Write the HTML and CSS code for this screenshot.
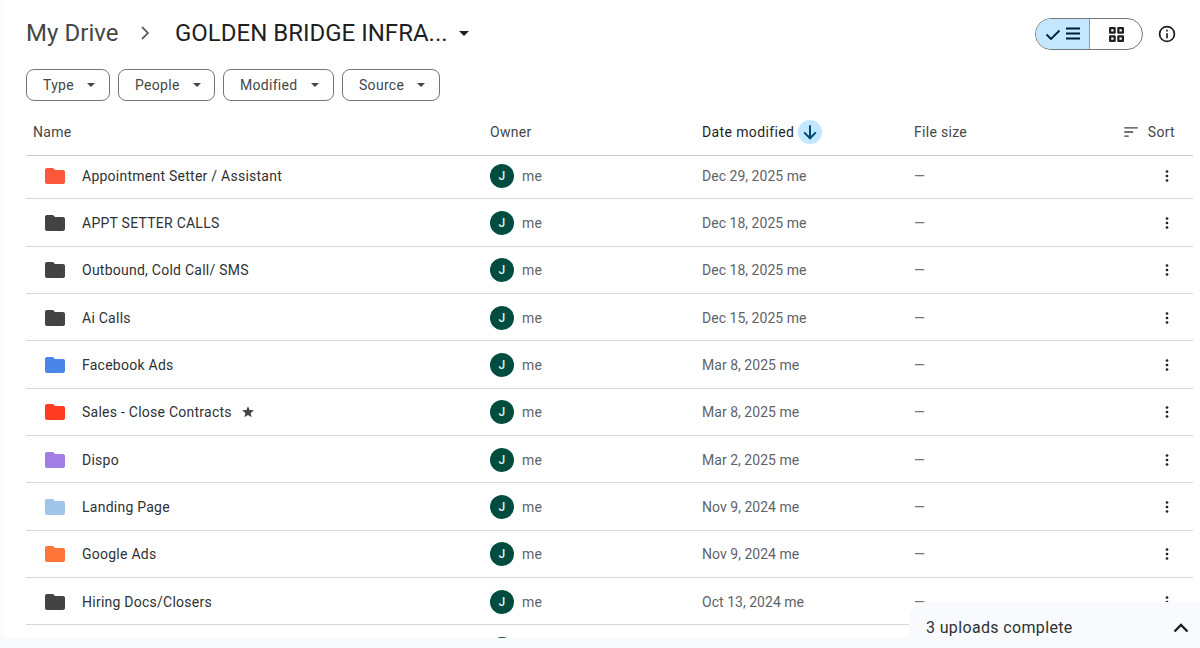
FILE: index.html
```html
<!DOCTYPE html>
<html lang="en">
<head>
<meta charset="utf-8">
<title>My Drive</title>
<link rel="stylesheet" href="styles.css">
</head>
<body>
<svg class="defs" width="0" height="0" aria-hidden="true"><defs>
<symbol id="folder" viewBox="0 0 24 24"><path d="M10 4H4c-1.1 0-2 .9-2 2v12c0 1.1.9 2 2 2h16c1.1 0 2-.9 2-2V8c0-1.1-.9-2-2-2h-8l-2-2z"/></symbol>
<symbol id="more" viewBox="0 0 24 24"><circle cx="12" cy="6" r="1.8"/><circle cx="12" cy="12" r="1.8"/><circle cx="12" cy="18" r="1.8"/></symbol>
<symbol id="caret" viewBox="0 0 10 5"><path d="M0 0h10L5 5z"/></symbol>
</defs></svg>
<main class="main">
  <header class="top">
    <div class="crumbs">
      <span class="crumb-root">My Drive</span>
      <svg class="crumb-sep" viewBox="0 0 24 24"><path d="M8 6 14 12 8 18" fill="none" stroke="currentColor" stroke-width="1.800"/></svg>
      <span class="crumb-current">GOLDEN BRIDGE INFRA...</span>
      <svg class="caret caret-title"><use href="#caret"/></svg>
    </div>
    <div class="view-tools">
      <div class="segment">
        <span class="seg seg-on">
          <svg class="seg-icon" viewBox="0 0 40 24"><path d="M3.500 12.500 8 17 16.500 8.500" fill="none" stroke="currentColor" stroke-width="1.800"/><path d="M23 6.500h14M23 11.500h14M23 16.500h14" fill="none" stroke="currentColor" stroke-width="2.200"/></svg>
        </span>
        <span class="seg seg-off">
          <svg class="grid-icon" viewBox="0 0 16 16"><path d="M1.200 1.200h4.800v4.800H1.200zM10 1.200h4.800v4.800H10zM1.200 10h4.800v4.800H1.200zM10 10h4.800v4.800H10z" fill="none" stroke="currentColor" stroke-width="2.400" stroke-linejoin="round"/></svg>
        </span>
      </div>
      <svg class="info" viewBox="0 0 24 24"><circle cx="12" cy="12" r="8.900" fill="none" stroke="currentColor" stroke-width="2.100"/><path d="M11 11h2v6h-2zM11 7h2v2h-2z" fill="currentColor"/></svg>
    </div>
  </header>

  <div class="filters">
    <span class="chip chip-type">Type<svg class="caret"><use href="#caret"/></svg></span>
    <span class="chip chip-people">People<svg class="caret"><use href="#caret"/></svg></span>
    <span class="chip chip-modified">Modified<svg class="caret"><use href="#caret"/></svg></span>
    <span class="chip chip-source">Source<svg class="caret"><use href="#caret"/></svg></span>
  </div>

  <section class="table">
    <div class="row head">
      <span class="head-name">Name</span>
      <span>Owner</span>
      <span class="head-date">Date modified
        <span class="sort-dir"><svg viewBox="0 0 24 24"><path d="M12 4v15M5 12.500l7 7 7-7" fill="none" stroke="currentColor" stroke-width="2.400"/></svg></span>
      </span>
      <span>File size</span>
      <span class="head-sort"><svg viewBox="0 0 24 24"><path d="M3 6.500h18M3 12h12M3 17.500h6" fill="none" stroke="currentColor" stroke-width="1.700"/></svg>Sort</span>
    </div>

    <div class="row item first">
      <span class="name"><svg class="folder f-coral"><use href="#folder"/></svg>Appointment Setter / Assistant</span>
      <span class="owner"><span class="avatar">J</span>me</span><span class="date">Dec 29, 2025 me</span><span class="size">—</span>
      <span class="actions"><svg class="more"><use href="#more"/></svg></span>
    </div>
    <div class="row item">
      <span class="name"><svg class="folder f-dark"><use href="#folder"/></svg>APPT SETTER CALLS</span>
      <span class="owner"><span class="avatar">J</span>me</span><span class="date">Dec 18, 2025 me</span><span class="size">—</span>
      <span class="actions"><svg class="more"><use href="#more"/></svg></span>
    </div>
    <div class="row item">
      <span class="name"><svg class="folder f-dark"><use href="#folder"/></svg>Outbound, Cold Call/ SMS</span>
      <span class="owner"><span class="avatar">J</span>me</span><span class="date">Dec 18, 2025 me</span><span class="size">—</span>
      <span class="actions"><svg class="more"><use href="#more"/></svg></span>
    </div>
    <div class="row item">
      <span class="name"><svg class="folder f-dark"><use href="#folder"/></svg>Ai Calls</span>
      <span class="owner"><span class="avatar">J</span>me</span><span class="date">Dec 15, 2025 me</span><span class="size">—</span>
      <span class="actions"><svg class="more"><use href="#more"/></svg></span>
    </div>
    <div class="row item">
      <span class="name"><svg class="folder f-blue"><use href="#folder"/></svg>Facebook Ads</span>
      <span class="owner"><span class="avatar">J</span>me</span><span class="date">Mar 8, 2025 me</span><span class="size">—</span>
      <span class="actions"><svg class="more"><use href="#more"/></svg></span>
    </div>
    <div class="row item">
      <span class="name"><svg class="folder f-red"><use href="#folder"/></svg>Sales - Close Contracts<svg class="star" viewBox="0 0 24 24"><path d="m12 17.300 6.200 3.700-1.600-7L22 9.200l-7.200-.6L12 2 9.200 8.600 2 9.200 7.500 14l-1.700 7z"/></svg></span>
      <span class="owner"><span class="avatar">J</span>me</span><span class="date">Mar 8, 2025 me</span><span class="size">—</span>
      <span class="actions"><svg class="more"><use href="#more"/></svg></span>
    </div>
    <div class="row item">
      <span class="name"><svg class="folder f-purple"><use href="#folder"/></svg>Dispo</span>
      <span class="owner"><span class="avatar">J</span>me</span><span class="date">Mar 2, 2025 me</span><span class="size">—</span>
      <span class="actions"><svg class="more"><use href="#more"/></svg></span>
    </div>
    <div class="row item">
      <span class="name"><svg class="folder f-sky"><use href="#folder"/></svg>Landing Page</span>
      <span class="owner"><span class="avatar">J</span>me</span><span class="date">Nov 9, 2024 me</span><span class="size">—</span>
      <span class="actions"><svg class="more"><use href="#more"/></svg></span>
    </div>
    <div class="row item">
      <span class="name"><svg class="folder f-orange"><use href="#folder"/></svg>Google Ads</span>
      <span class="owner"><span class="avatar">J</span>me</span><span class="date">Nov 9, 2024 me</span><span class="size">—</span>
      <span class="actions"><svg class="more"><use href="#more"/></svg></span>
    </div>
    <div class="row item">
      <span class="name"><svg class="folder f-dark"><use href="#folder"/></svg>Hiring Docs/Closers</span>
      <span class="owner"><span class="avatar">J</span>me</span><span class="date">Oct 13, 2024 me</span><span class="size">—</span>
      <span class="actions"><svg class="more"><use href="#more"/></svg></span>
    </div>
    <div class="row item">
      <span class="owner owner-cut"><span class="avatar"></span></span>
    </div>
  </section>
</main>

<aside class="uploads">
  <span>3 uploads complete</span>
  <svg viewBox="0 0 24 24"><path d="M5.500 15.500 12 9l6.500 6.500" fill="none" stroke="currentColor" stroke-width="2.400"/></svg>
</aside>
</body>
</html>
```

FILE: styles.css
```css
* { box-sizing: border-box; }
html, body { margin: 0; height: 100%; }
body {
  height: 648px;
  overflow: hidden;
  background: #f8fafd;
  font-family: Roboto, "Noto Sans", "Liberation Sans", sans-serif;
  color: #444746;
  position: relative;
}
.defs { position: absolute; }

.main {
  height: 638px;
  padding: 0 7px 0 26px;
  background: linear-gradient(90deg, #f9fbfe, #fff 8px);
  overflow: hidden;
}

.top {
  height: 69px;
  display: flex;
  justify-content: space-between;
  align-items: flex-start;
  padding-top: 17px;
}
.crumbs { display: flex; align-items: center; height: 32px; }
.crumb-root { font-size: 24px; color: #444746; letter-spacing: .05px; width: 105px; }
.crumb-sep { width: 24px; height: 24px; color: #5f6368; margin-right: 17px; margin-left: 3px; flex: none; }
.crumb-current { font-size: 24px; color: #1f1f1f; letter-spacing: 0; width: 284px; white-space: nowrap; }
.caret { width: 8px; height: 4px; fill: #444746; margin-left: 13px; flex: none; }
.caret-title { margin-left: 0; width: 10px; height: 5px; fill: #1f1f1f; }

.view-tools { display: flex; align-items: center; gap: 14px; padding-right: 16px; padding-top: 1px; }
.segment {
  display: flex;
  width: 108px;
  height: 32px;
  border: 1px solid #747775;
  border-radius: 16px;
  overflow: hidden;
}
.seg { display: flex; align-items: center; justify-content: center; }
.seg-on { width: 54px; background: #c2e7ff; border-right: 1px solid #8e9a9f; color: #001d35; }
.seg-off { flex: 1; color: #1f1f1f; }
.seg-icon { width: 40px; height: 24px; }
.grid-icon { width: 15px; height: 15px; }
.info { width: 20px; height: 20px; color: #1f1f1f; }

.filters { display: flex; gap: 8px; height: 32px; }
.chip {
  display: flex;
  align-items: center;
  height: 32px;
  padding-left: 16px;
  border: 1px solid #747775;
  border-radius: 8px;
  font-size: 14px;
  letter-spacing: .3px;
  color: #444746;
}
.chip-type { width: 84px; }
.chip-people { width: 97px; }
.chip-modified { width: 111px; }
.chip-source { width: 98px; }

.table { margin-top: 0; }
.row {
  display: grid;
  grid-template-columns: 464px 212px 212px 1fr 60px;
  align-items: center;
  border-bottom: 1px solid #d6d8da;
  font-size: 14px;
  letter-spacing: .3px;
}
.head {
  height: 55px;
  color: #444746;
  padding-top: 8px;
  border-bottom-color: #c7c9cb;
}
.head-name { padding-left: 7px; }
.head-date { display: flex; align-items: center; gap: 4px; color: #1f1f1f; letter-spacing: .38px; }
.sort-dir {
  width: 24px;
  height: 24px;
  border-radius: 50%;
  background: #c2e7ff;
  color: #004a77;
  display: flex;
  align-items: center;
  justify-content: center;
}
.sort-dir svg { width: 20px; height: 20px; }
.head-sort {
  display: flex;
  align-items: center;
  gap: 8px;
  grid-column: 4 / 6;
  justify-self: end;
  padding-right: 18px;
  grid-row: 1;
}
.head > span:nth-child(4) { grid-column: 4; grid-row: 1; }
.head-sort svg { width: 18px; height: 18px; }

.item { height: 47.33px; padding-top: 1px; }
.item.first { height: 43.4px; padding-top: 0; padding-bottom: 2px; }
.name { display: flex; align-items: center; color: #2f3133; letter-spacing: .25px; }
.folder { width: 24px; height: 24px; margin: 0 15px 0 17px; flex: none; }
.f-coral { fill: #fb573a; }
.f-dark { fill: #434343; }
.f-blue { fill: #4a86e8; }
.f-red { fill: #ff3c22; }
.f-purple { fill: #a27ee4; }
.f-sky { fill: #9fc5e8; }
.f-orange { fill: #ff7537; }
.star { width: 14px; height: 14px; fill: #444746; margin-left: 9px; }

.owner { display: flex; align-items: center; gap: 8px; color: #5f6368; letter-spacing: .1px; }
.owner-cut { grid-column: 2; }
.avatar {
  width: 24px;
  height: 24px;
  border-radius: 50%;
  background: #004d40;
  color: #e0efe9;
  font-size: 12px;
  font-weight: 500;
  display: flex;
  align-items: center;
  justify-content: center;
}
.date { color: #5f6368; letter-spacing: .03px; }
.size { color: #70757a; }
.actions { display: flex; justify-content: flex-end; padding-right: 17px; }
.more { width: 18px; height: 18px; fill: #1f1f1f; }

.uploads {
  position: absolute;
  right: 0;
  bottom: 0;
  width: 291px;
  height: 46px;
  display: flex;
  align-items: center;
  justify-content: space-between;
  padding: 5px 7px 0 17px;
  background: #f8fafd;
  border-top-left-radius: 16px;
  font-size: 16px;
  letter-spacing: .35px;
  color: #2f3133;
}
.uploads svg { width: 24px; height: 24px; color: #1f1f1f; }
```
